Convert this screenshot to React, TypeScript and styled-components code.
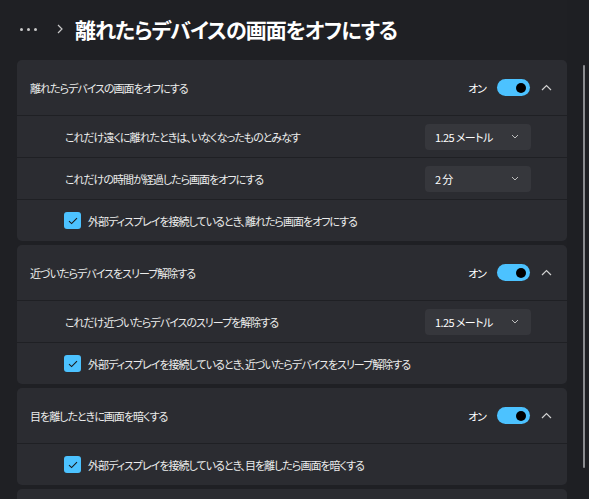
import React from 'react'
import styled, { createGlobalStyle } from 'styled-components'

const GlobalStyle = createGlobalStyle`
    body {
        margin: 0;
        background: #1f2024;
        font-family: 'Noto Sans CJK JP', 'Noto Sans', sans-serif;
        font-feature-settings: 'palt';
        color: #ececec;
    }
`

const Page = styled.div`
    display: flex;
    width: 589px;
    height: 499px;
    overflow: hidden;
`

const Content = styled.div`
    flex: 1;
    padding-left: 17px;
    display: flex;
    flex-direction: column;

    & > * {
        flex-shrink: 0;
    }
`

const ScrollTrack = styled.div`
    position: relative;
    width: 22px;
    background: #1e1f23;

    .thumb {
        position: absolute;
        left: 16px;
        top: 65px;
        width: 2px;
        height: 403px;
        border-radius: 1px;
        background: #8a8b8f;
    }
`

const TopBar = styled.div`
    height: 58px;
    display: flex;
    align-items: center;
    padding-left: 3px;
    gap: 12px;
`

const Dots = styled.div`
    display: flex;
    gap: 4px;
    span {
        width: 3px;
        height: 3px;
        border-radius: 50%;
        background: #c8c8c8;
    }
`

const Title = styled.h1`
    margin: 0;
    font-size: 21px;
    font-weight: 700;
    color: #ffffff;
    letter-spacing: -1px;
`

const Cards = styled.div`
    width: 550px;
    display: flex;
    flex-direction: column;
    gap: 4px;
    margin-top: 2px;
`

const Card = styled.div<{ $stub?: boolean }>`
    background: #2b2c31;
    border-radius: 5px;
    overflow: hidden;
    flex-shrink: 0;
    ${({ $stub }) => ($stub ? 'height: 20px;' : '')}
`

const HeaderRow = styled.div`
    height: 55px;
    display: flex;
    align-items: center;
    padding: 0 15px 0 13px;
`

const Label = styled.div`
    flex: 1;
    font-size: 11px;
    letter-spacing: -1px;
    color: #ececec;
`

const Row = styled.div<{ $check?: boolean }>`
    height: 41px;
    display: flex;
    align-items: center;
    border-top: 1px solid #1f2024;
    padding: 0 36px 0 ${({ $check }) => ($check ? '47px' : '48px')};
`

const OnText = styled.span`
    font-size: 11px;
    letter-spacing: -1px;
    color: #ffffff;
    margin-right: 11px;
`

const Toggle = styled.div`
    width: 33px;
    height: 17px;
    border-radius: 9px;
    background: #4cc2ff;
    display: flex;
    align-items: center;
    justify-content: flex-end;
    padding-right: 4px;
    box-sizing: border-box;

    span {
        width: 10px;
        height: 10px;
        border-radius: 50%;
        background: #000;
    }
`

const ChevronBox = styled.div`
    margin-left: 10px;
    width: 12px;
    display: flex;
    align-items: center;
    justify-content: center;
`

const Dropdown = styled.div`
    width: 106px;
    height: 26px;
    border-radius: 4px;
    background: #36373c;
    display: flex;
    align-items: center;
    justify-content: space-between;
    padding: 0 12px 0 10px;
    box-sizing: border-box;
    font-size: 11px;
    letter-spacing: -0.6px;
    color: #ffffff;
`

const Checkbox = styled.div`
    width: 17px;
    height: 17px;
    border-radius: 3px;
    background: #4cc2ff;
    display: flex;
    align-items: center;
    justify-content: center;
    margin-right: 7px;
`

function ChevronUp() {
    return (
        <svg width="11" height="7" viewBox="0 0 11 7" fill="none">
            <path d="M1 6L5.5 1.5L10 6" stroke="#d0d0d0" strokeWidth="1.2" />
        </svg>
    )
}

function ChevronDown() {
    return (
        <svg width="8" height="5" viewBox="0 0 8 5" fill="none">
            <path d="M1 1L4 4L7 1" stroke="#bdbdbd" strokeWidth="1" />
        </svg>
    )
}

function Check() {
    return (
        <svg width="10" height="8" viewBox="0 0 10 8" fill="none">
            <path d="M1 4.2L3.6 6.6L9 1.2" stroke="#1a1a1a" strokeWidth="1.1" />
        </svg>
    )
}

type Sub = { kind: 'select'; text: string; value: string } | { kind: 'check'; text: string }

const sections: { title: string; rows: Sub[] }[] = [
    {
        title: '離れたらデバイスの画面をオフにする',
        rows: [
            { kind: 'select', text: 'これだけ遠くに離れたときは、いなくなったものとみなす', value: '1.25 メートル' },
            { kind: 'select', text: 'これだけの時間が経過したら画面をオフにする', value: '2 分' },
            { kind: 'check', text: '外部ディスプレイを接続しているとき、離れたら画面をオフにする' },
        ],
    },
    {
        title: '近づいたらデバイスをスリープ解除する',
        rows: [
            { kind: 'select', text: 'これだけ近づいたらデバイスのスリープを解除する', value: '1.25 メートル' },
            { kind: 'check', text: '外部ディスプレイを接続しているとき、近づいたらデバイスをスリープ解除する' },
        ],
    },
    {
        title: '目を離したときに画面を暗くする',
        rows: [{ kind: 'check', text: '外部ディスプレイを接続しているとき、目を離したら画面を暗くする' }],
    },
]

export default function App() {
    return (
        <Page>
            <GlobalStyle />
            <Content>
                <TopBar>
                    <Dots>
                        <span />
                        <span />
                        <span />
                    </Dots>
                    <svg width="6" height="10" viewBox="0 0 6 10" fill="none" style={{ marginLeft: 8 }}>
                        <path d="M1 1L5 5L1 9" stroke="#c8c8c8" strokeWidth="1.2" />
                    </svg>
                    <Title>離れたらデバイスの画面をオフにする</Title>
                </TopBar>
                <Cards>
                    {sections.map(s => (
                        <Card key={s.title}>
                            <HeaderRow>
                                <Label>{s.title}</Label>
                                <OnText>オン</OnText>
                                <Toggle>
                                    <span />
                                </Toggle>
                                <ChevronBox>
                                    <ChevronUp />
                                </ChevronBox>
                            </HeaderRow>
                            {s.rows.map(r =>
                                r.kind === 'select' ? (
                                    <Row key={r.text}>
                                        <Label>{r.text}</Label>
                                        <Dropdown>
                                            <span>{r.value}</span>
                                            <ChevronDown />
                                        </Dropdown>
                                    </Row>
                                ) : (
                                    <Row key={r.text} $check>
                                        <Checkbox>
                                            <Check />
                                        </Checkbox>
                                        <Label>{r.text}</Label>
                                    </Row>
                                )
                            )}
                        </Card>
                    ))}
                    <Card $stub />
                </Cards>
            </Content>
            <ScrollTrack>
                <div className="thumb" />
            </ScrollTrack>
        </Page>
    )
}
